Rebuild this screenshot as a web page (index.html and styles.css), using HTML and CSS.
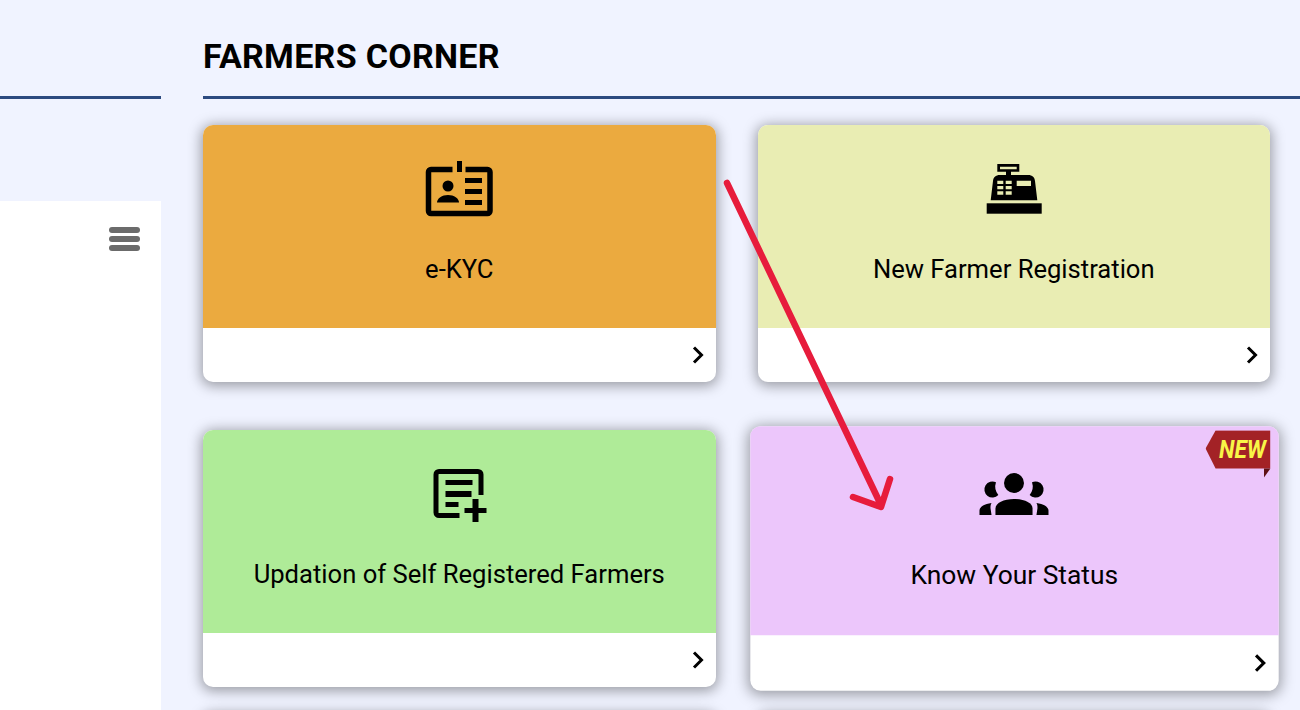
FILE: index.html
```html
<!DOCTYPE html>
<html lang="en">
<head>
  <meta charset="UTF-8">
  <meta name="viewport" content="width=device-width, initial-scale=1.0">
  <title>Farmers Corner</title>
  <link rel="stylesheet" href="styles.css">
</head>
<body>

  <div id="page">
    <div id="sidebar">
      <div class="side-head"></div>
      <div class="side-panel">
        <div class="menu-btn">
          <span></span>
          <span></span>
          <span></span>
        </div>
      </div>
    </div>

    <div id="main">
      <h1 class="title">FARMERS CORNER</h1>

      <div class="cards">
        <div class="card">
          <div class="card-top orange">
            <svg class="icon" viewBox="-.5 0 80 64">
              <path d="M33 12.5H11.5A2.5 2.5 0 0 0 9 15V54a2.5 2.5 0 0 0 2.5 2.5H68a2.5 2.5 0 0 0 2.5-2.5V15a2.5 2.5 0 0 0-2.5-2.5H46" fill="none" stroke="#000" stroke-width="5.5"/>
              <rect x="37.5" y="4" width="5" height="11"/>
              <circle cx="28.5" cy="29" r="5.5"/>
              <path d="M17.5 45.5c0-4 5-7.500 11-7.500s11 3.500 11 7.500z"/>
              <rect x="45.5" y="21" width="17" height="5"/>
              <rect x="45.5" y="32" width="17" height="5"/>
              <rect x="45.5" y="43" width="17" height="5"/>
            </svg>
            <div class="card-name">e-KYC</div>
          </div>
          <div class="card-foot">
            <svg class="chev" viewBox="0 0 12 18"><path d="M2 1.500L9.500 9L2 16.500" fill="none" stroke="#000" stroke-width="3"/></svg>
          </div>
        </div>

        <div class="card">
          <div class="card-top lime">
            <svg class="icon" viewBox="0 0 80 64">
              <path fill-rule="evenodd" d="M23.300 7h22v7.700H37V18h17c4.500 0 6.700 2.500 7 6l2.300 19.300H16.700L19 24c.3-3.500 2.500-6 7-6h6v-3.300h-8.700zM26 9.700v2.600h16.700V9.700zM23.300 23.700V27h6v-3.300zm8.400 0V27h6v-3.300zm11 0V29H57v-5.300zM23.300 29v3.300h6V29zm8.400 0v3.300h6V29zM23.300 34.300v3.400h6v-3.400zm8.400 0v3.400h6v-3.400z"/>
              <rect x="12.700" y="46.300" width="55" height="10.400"/>
            </svg>
            <div class="card-name">New Farmer Registration</div>
          </div>
          <div class="card-foot">
            <svg class="chev" viewBox="0 0 12 18"><path d="M2 1.500L9.500 9L2 16.500" fill="none" stroke="#000" stroke-width="3"/></svg>
          </div>
        </div>

        <div class="card">
          <div class="card-top green">
            <svg class="icon" viewBox="0 0 80 64">
              <path d="M40.500 53.500H20a3 3 0 0 1-3-3V12.500a3 3 0 0 1 3-3H59a3 3 0 0 1 3 3V33" fill="none" stroke="#000" stroke-width="5"/>
              <rect x="26.5" y="18" width="27" height="5"/>
              <rect x="26.5" y="29" width="26" height="6"/>
              <rect x="26.5" y="40" width="13" height="5"/>
              <rect x="53.5" y="37" width="6" height="23"/>
              <rect x="45.5" y="46" width="22" height="5"/>
            </svg>
            <div class="card-name">Updation of Self Registered Farmers</div>
          </div>
          <div class="card-foot">
            <svg class="chev" viewBox="0 0 12 18"><path d="M2 1.500L9.500 9L2 16.500" fill="none" stroke="#000" stroke-width="3"/></svg>
          </div>
        </div>

        <div class="card hovered">
          <svg class="badge" viewBox="0 0 65 47">
            <path d="M10 0h55v38H10L0 18z" fill="#a32226"/>
            <path d="M58.5 38H65L58.500 47z" fill="#5e1014"/>
            <text x="13.5" y="28" class="badge-text" textLength="47" lengthAdjust="spacingAndGlyphs">NEW</text>
          </svg>
          <div class="card-top purple">
            <svg class="icon" viewBox="0 0 80 64">
              <circle cx="40" cy="23.2" r="9.7"/>
              <path d="M22.500 22.500A7.800 7.800 0 1 0 24.800 34.800A13 13 0 0 1 22.500 22.500z"/>
              <path d="M57.500 22.500A7.800 7.800 0 1 1 55.200 34.800A13 13 0 0 0 57.500 22.500z"/>
              <path d="M22 54.200V48c0-5.500 8-9.300 18-9.300s18 3.800 18 9.300v6.200z"/>
              <path d="M18.200 54.200H6.500V50c0-3.500 4.500-6.500 11.700-7.400c-1 1.500-1 3-1 5z"/>
              <path d="M61.800 54.200H73.500V50c0-3.500-4.500-6.500-11.700-7.400c1 1.500 1 3 1 5z"/>
            </svg>
            <div class="card-name">Know Your Status</div>
          </div>
          <div class="card-foot">
            <svg class="chev" viewBox="0 0 12 18"><path d="M2 1.500L9.500 9L2 16.500" fill="none" stroke="#000" stroke-width="3"/></svg>
          </div>
        </div>

        <div class="card next-row"><div class="card-top"></div></div>
        <div class="card next-row"><div class="card-top"></div></div>
      </div>
    </div>

    <!-- red arrow drawn over the page -->
    <svg class="arrow" viewBox="0 0 1300 710">
      <path d="M727 183L881 505M853 497L881 507L890 479" fill="none" stroke="#e71c3c" stroke-width="6.5" stroke-linecap="round" stroke-linejoin="round"/>
    </svg>
  </div>

</body>
</html>
```

FILE: styles.css
```css
html, body {
  margin: 0;
  height: 100%;
  overflow: hidden;
}

body {
  font-family: Roboto, "Liberation Sans", sans-serif;
  background-color: #f0f3ff;
  color: #000;
}

#page {
  position: relative;
  display: flex;
  height: 710px;
  overflow: hidden;
}

#sidebar {
  width: 161px;
  flex-shrink: 0;
  display: flex;
  flex-direction: column;
}

.side-head {
  height: 96px;
  border-bottom: 3px solid #2c4a80;
}

.side-panel {
  flex: 1;
  margin-top: 102px;
  background-color: #fff;
  padding: 26px 21px 0 0;
}

.menu-btn {
  display: flex;
  flex-direction: column;
  gap: 3px;
  width: 31px;
  margin-left: auto;
}

.menu-btn span {
  height: 6px;
  border-radius: 3px;
  background-color: #6b6b6b;
}

#main {
  flex: 1;
  margin-left: 42px;
}

.title {
  height: 96px;
  margin: 0;
  border-bottom: 3px solid #2c4a80;
  font-size: 34px;
  font-weight: 700;
  letter-spacing: .3px;
  line-height: 113px;
  overflow: hidden;
}

.cards {
  display: grid;
  grid-template-columns: 1fr 1fr;
  column-gap: 42px;
  row-gap: 48px;
  margin-top: 26px;
  padding-right: 30px;
}

.card {
  position: relative;
  border-radius: 10px;
  background-color: #fff;
  box-shadow: 0 2px 13px 2px rgba(0, 0, 0, .36);
}

.card-top {
  height: 203px;
  border-radius: 10px 10px 0 0;
  display: flex;
  flex-direction: column;
  align-items: center;
}

.orange { background-color: #ebaa3f; }
.lime { background-color: #e9edb3; }
.green { background-color: #afeb98; }
.purple { background-color: #ecc6fb; }

.icon {
  width: 80px;
  height: 64px;
  margin-top: 32px;
}

.card-name {
  margin-top: 33px;
  font-size: 25.6px;
  line-height: 30px;
  text-align: center;
}

.card-foot {
  height: 53px;
  padding-bottom: 1px;
  padding-right: 12px;
  display: flex;
  align-items: center;
  justify-content: flex-end;
}

.chev {
  width: 12px;
  height: 18px;
}

.hovered {
  transform: scale(1.03);
}

.badge {
  position: absolute;
  top: 4px;
  right: 8px;
  width: 63px;
  height: 46px;
}

.badge-text {
  font-size: 25px;
  font-weight: 700;
  font-style: italic;
  fill: #f8f547;
}

.next-row {
  margin-top: -22px;
}

.arrow {
  position: absolute;
  top: 0;
  left: 0;
  width: 1300px;
  height: 710px;
  pointer-events: none;
}
```
